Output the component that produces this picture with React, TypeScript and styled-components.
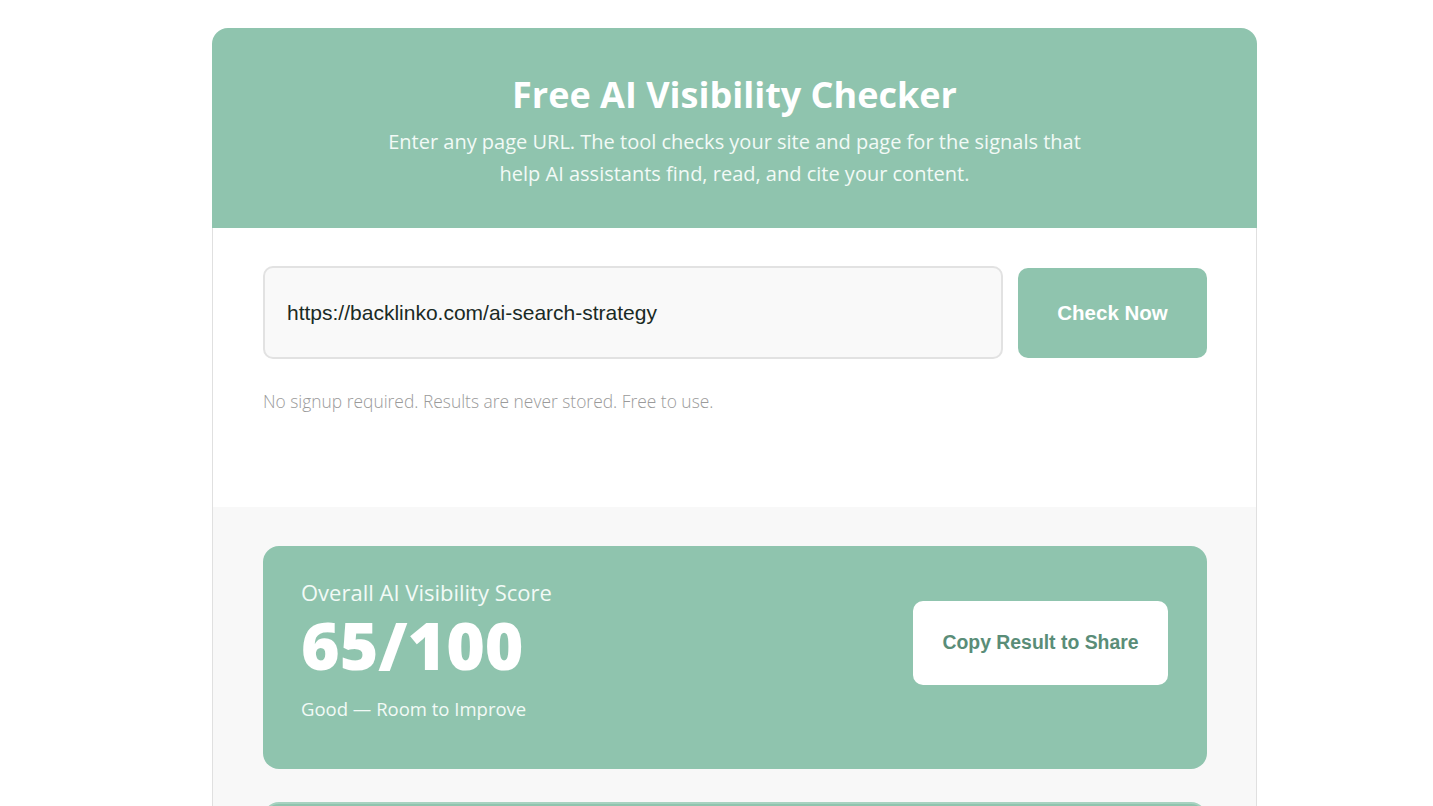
import styled, { createGlobalStyle } from 'styled-components';

const GlobalStyle = createGlobalStyle`
  body {
    margin: 0;
    background: #ffffff;
    font-family: 'Segoe UI', 'Open Sans', sans-serif;
  }
`;

const Page = styled.div`
  padding: 28px 0 0 212px;
`;

const Card = styled.div`
  width: 1045px;
  border-radius: 16px 16px 0 0;
  overflow: hidden;
`;

const Header = styled.header`
  height: 200px;
  box-sizing: border-box;
  background: #8fc4ae;
  color: #ffffff;
  text-align: center;
  padding-top: 42px;
`;

const Title = styled.h1`
  margin: 0;
  font-size: 36px;
  font-weight: 700;
  line-height: 50px;
`;

const Subtitle = styled.p`
  margin: 6px auto 0;
  width: 720px;
  font-size: 20px;
  font-weight: 400;
  line-height: 32px;
  color: #f2faf6;
`;

const Body = styled.section`
  border-left: 1px solid #e0e0e0;
  border-right: 1px solid #e0e0e0;
  padding: 38px 49px 94px 50px;
  background: #ffffff;
`;

const InputRow = styled.div`
  display: flex;
  gap: 15px;
  align-items: center;
`;

const UrlInput = styled.input`
  flex: 1;
  height: 93px;
  box-sizing: border-box;
  border: 2px solid #e2e2e2;
  border-radius: 10px;
  background: #f9f9f9;
  padding: 0 22px;
  font-family: 'Liberation Sans', Arial, sans-serif;
  font-size: 21px;
  color: #1a2a24;
  outline: none;
`;

const CheckButton = styled.button`
  width: 189px;
  height: 90px;
  border: none;
  border-radius: 10px;
  background: #8fc4ae;
  color: #ffffff;
  font-family: 'Liberation Sans', Arial, sans-serif;
  font-size: 20.5px;
  font-weight: 700;
  cursor: pointer;
`;

const Helper = styled.p`
  margin: 30px 0 0;
  font-size: 17.4px;
  line-height: 24px;
  font-weight: 300;
  color: #9a9a9a;
`;

const Results = styled.section`
  background: #f8f8f8;
  border-left: 1px solid #e0e0e0;
  border-right: 1px solid #e0e0e0;
  padding: 39px 49px 0 50px;
  display: flex;
  flex-direction: column;
  gap: 33px;
`;

const ScoreCard = styled.div`
  background: #8fc4ae;
  border-radius: 16px;
  height: 223px;
  box-sizing: border-box;
  padding: 0 39px 0 38px;
  display: flex;
  justify-content: space-between;
  align-items: center;
`;

const ScoreInfo = styled.div`
  display: flex;
  flex-direction: column;
  color: #ffffff;
  align-self: flex-start;
  padding-top: 29px;
`;

const ScoreLabel = styled.div`
  font-size: 22px;
  font-weight: 500;
  color: #f2faf6;
  line-height: 34px;
`;

const ScoreValue = styled.div`
  font-size: 66px;
  font-weight: 800;
  line-height: 70px;
`;

const ScoreStatus = styled.div`
  font-size: 18.5px;
  line-height: 26px;
  color: #f2faf6;
  margin-top: 17px;
`;

const ShareButton = styled.button`
  width: 255px;
  height: 84px;
  border: none;
  border-radius: 10px;
  background: #ffffff;
  color: #5a8d78;
  font-family: 'Liberation Sans', Arial, sans-serif;
  font-size: 19.4px;
  font-weight: 700;
  margin-top: -30px;
  cursor: pointer;
`;

const NextCard = styled.div`
  height: 120px;
  background: #8fc4ae;
  border: 2px solid #a7d2c0;
  border-radius: 16px;
`;

export default function App() {
  return (
    <>
      <GlobalStyle />
      <Page>
        <Card>
          <Header>
            <Title>Free AI Visibility Checker</Title>
            <Subtitle>
              Enter any page URL. The tool checks your site and page for the signals that help AI
              assistants find, read, and cite your content.
            </Subtitle>
          </Header>
          <Body>
            <InputRow>
              <UrlInput defaultValue="https://backlinko.com/ai-search-strategy" />
              <CheckButton>Check Now</CheckButton>
            </InputRow>
            <Helper>No signup required. Results are never stored. Free to use.</Helper>
          </Body>
          <Results>
            <ScoreCard>
              <ScoreInfo>
                <ScoreLabel>Overall AI Visibility Score</ScoreLabel>
                <ScoreValue>65/100</ScoreValue>
                <ScoreStatus>Good — Room to Improve</ScoreStatus>
              </ScoreInfo>
              <ShareButton>Copy Result to Share</ShareButton>
            </ScoreCard>
            <NextCard />
          </Results>
        </Card>
      </Page>
    </>
  );
}
